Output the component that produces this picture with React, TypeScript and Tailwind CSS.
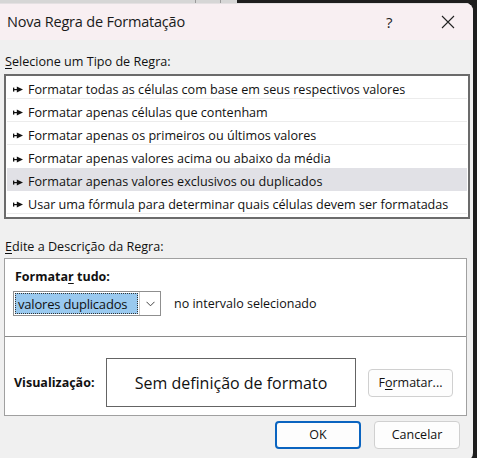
import React from "react";

const Arrow = () => (
  <svg width="10" height="7" viewBox="0 0 10 7" className="shrink-0">
    <rect x="0" y="1.6" width="1.3" height="4" fill="#111" />
    <rect x="0" y="3" width="5" height="1.2" fill="#111" />
    <path d="M3.8 0.6 L10 3.6 L3.8 6.6 Z" fill="#111" />
  </svg>
);

const items = [
  "Formatar todas as células com base em seus respectivos valores",
  "Formatar apenas células que contenham",
  "Formatar apenas os primeiros ou últimos valores",
  "Formatar apenas valores acima ou abaixo da média",
  "Formatar apenas valores exclusivos ou duplicados",
  "Usar uma fórmula para determinar quais células devem ser formatadas",
];

export default function App() {
  const font = { fontFamily: '"Open Sans", "Noto Sans", sans-serif' };
  return (
    <div className="w-[477px] h-[458px] overflow-hidden bg-[#1e1e1e] flex flex-col" style={font}>
      <div className="h-[3px] flex shrink-0">
        <div className="w-[237px] bg-[#d6d6d6] flex">
          <div className="w-[195px]" />
          <div className="w-px bg-[#9a9a9a]" />
          <div className="w-[24px]" />
          <div className="w-px bg-[#9a9a9a]" />
        </div>
        <div className="flex-1 bg-[#1e1e1e]" />
      </div>
      <div className="flex flex-1 min-h-0">
        <div className="w-[473px] h-[458px] bg-[#f0f0f0] rounded-tr-[8px] rounded-br-[8px] flex flex-col text-[12.6px] text-[#111] leading-[16px] overflow-hidden">
          {/* Title bar */}
          <div className="h-[37px] bg-[#f8eff2] flex items-center shrink-0 border-t border-[#e4e0e2]">
            <span className="pl-[7px] text-[14.5px] tracking-[-0.2px] text-[#1a1a1a]">Nova Regra de Formatação</span>
            <div className="flex-1" />
            <span className="text-[15px] w-[12px] text-[#222] mr-[43px]">?</span>
            <svg width="14" height="14" viewBox="0 0 14 14" className="mr-[18px]">
              <path d="M1 1 L13 13 M13 1 L1 13" stroke="#222" strokeWidth="1.1" />
            </svg>
          </div>
          {/* body */}
          <div className="px-[4px] flex flex-col">
            <div className="pt-[14px] pl-[1px] h-[34px]">
              <span className="underline underline-offset-2">S</span>elecione um Tipo de Regra:
            </div>
            <div className="w-[466px] h-[145px] border-2 border-[#6b6b6b] bg-white pl-[1px] pr-[1px] flex flex-col">
              {items.map((t, i) => (
                <div
                  key={i}
                  className={
                    "h-[23px] pt-[5px] flex items-center gap-[5px] pl-[6px] shrink-0 " +
                    (i === 4 ? "bg-[#e1e1e6]" : "") +
                    (i !== 4 && i !== 3 ? " border-b border-[#ececec]" : "")
                  }
                >
                  <Arrow />
                  <span>{t}</span>
                </div>
              ))}
            </div>
            <div className="pt-[20px] pl-[1px] h-[39px]">
              <span className="underline underline-offset-2">E</span>dite a Descrição da Regra:
            </div>
            <div className="w-[463px] h-[158px] border border-[#a0a0a0] bg-white flex flex-col">
              <div className="h-[78px] pl-[10px] pt-[10px] flex flex-col border-b border-[#8a8a8a]">
                <div className="font-bold text-[12.5px]">
                  Formata<span className="underline underline-offset-2">r</span> tudo:
                </div>
                <div className="flex items-center mt-[6px]">
                  <div className="w-[148px] h-[25px] border border-[#8f8f8f] flex items-stretch bg-white ml-[-2px]">
                    <div className="m-[1px] w-[123px] bg-[#99c9ef] border border-dotted border-[#333] flex items-center pl-[2px] text-[13px] tracking-[-0.2px]">
                      valores duplicados
                    </div>
                    <div className="flex-1 border-l border-[#c9c9c9] flex items-center justify-center">
                      <svg width="9" height="6" viewBox="0 0 9 6">
                        <path d="M0.5 0.8 L4.5 4.8 L8.5 0.8" stroke="#444" strokeWidth="1" fill="none" />
                      </svg>
                    </div>
                  </div>
                  <span className="ml-[13px] text-[12.5px]">no intervalo selecionado</span>
                </div>
              </div>
              <div className="flex items-center pl-[9px] pt-[21px]">
                <span className="font-bold w-[92px] text-[12.5px]">Visualização:</span>
                <div className="w-[250px] h-[49px] border border-[#646464] flex items-center justify-center text-[16px]">
                  Sem definição de formato
                </div>
                <div className="ml-[12px] w-[85px] h-[28px] rounded-[4px] border border-[#d0d0d0] bg-[#fdfdfd] flex items-center justify-center text-[12.5px]">
                  F<span className="underline underline-offset-2">o</span>rmatar...
                </div>
              </div>
            </div>
            <div className="flex justify-end mt-[5px] pr-[9px] gap-[13px]">
              <div className="w-[86px] h-[28px] rounded-[4px] border-2 border-[#0a64c0] bg-[#fdfdfd] flex items-center justify-center text-[12.5px]">
                OK
              </div>
              <div className="w-[86px] h-[28px] rounded-[4px] border border-[#d0d0d0] bg-[#fdfdfd] flex items-center justify-center text-[12.5px]">
                Cancelar
              </div>
            </div>
          </div>
        </div>
      </div>
    </div>
  );
}
